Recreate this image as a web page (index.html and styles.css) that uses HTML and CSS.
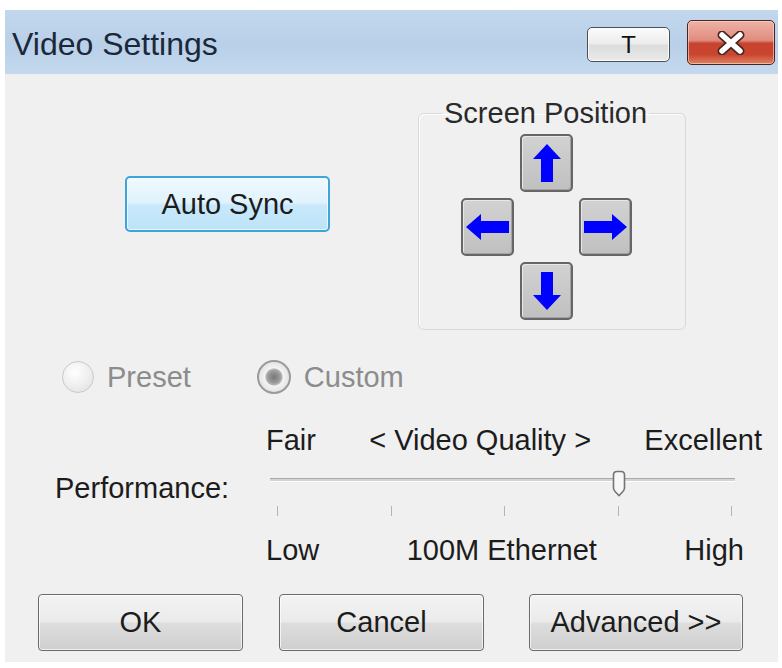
FILE: index.html
```html
<!DOCTYPE html>
<html lang="en">

<head>
    <meta charset="UTF-8">
    <meta name="viewport" content="width=device-width, initial-scale=1.0">
    <title>Video Settings</title>
    <link rel="stylesheet" href="styles.css">
</head>

<body>
    <div class="dialog">
        <!-- Window caption -->
        <div class="titlebar">
            <span class="title">Video Settings</span>
            <div class="caption-buttons">
                <button class="cap-btn pin" type="button">T</button>
                <button class="cap-btn close" type="button" aria-label="Close">
                    <svg width="32" height="24" viewBox="0 0 32 24">
                        <path d="M7 4 L25 20 M25 4 L7 20" stroke="#4a2622" stroke-width="9" stroke-linecap="round" />
                        <path d="M7 4 L25 20 M25 4 L7 20" stroke="#ffffff" stroke-width="5.5" stroke-linecap="round" />
                    </svg>
                </button>
            </div>
        </div>

        <div class="content">
            <div class="top-row">
                <button class="btn sync" type="button">Auto Sync</button>

                <fieldset class="position">
                    <legend>Screen Position</legend>
                    <div class="arrows">
                        <button class="arrow up" type="button" aria-label="Up">
                            <svg width="28" height="38" viewBox="0 0 28 38">
                                <polygon points="14,0 28,15 20,15 20,38 8,38 8,15 0,15" fill="#0000ff" />
                            </svg>
                        </button>
                        <button class="arrow left" type="button" aria-label="Left">
                            <svg width="43" height="26" viewBox="0 0 43 26">
                                <polygon points="0,13 15,0 15,7 43,7 43,19 15,19 15,26" fill="#0000ff" />
                            </svg>
                        </button>
                        <button class="arrow right" type="button" aria-label="Right">
                            <svg width="43" height="26" viewBox="0 0 43 26">
                                <polygon points="43,13 28,0 28,7 0,7 0,19 28,19 28,26" fill="#0000ff" />
                            </svg>
                        </button>
                        <button class="arrow down" type="button" aria-label="Down">
                            <svg width="28" height="38" viewBox="0 0 28 38">
                                <polygon points="14,38 28,23 20,23 20,0 8,0 8,23 0,23" fill="#0000ff" />
                            </svg>
                        </button>
                    </div>
                </fieldset>
            </div>

            <!-- Preset / Custom choice (disabled) -->
            <div class="mode-row">
                <label class="radio">
                    <span class="dot"></span>
                    Preset
                </label>
                <label class="radio checked">
                    <span class="dot"></span>
                    Custom
                </label>
            </div>

            <div class="quality">
                <div class="scale-top">
                    <span>Fair</span>
                    <span>&lt; Video Quality &gt;</span>
                    <span>Excellent</span>
                </div>

                <div class="perf-label">Performance:</div>

                <div class="slider">
                    <div class="track">
                        <span class="thumb" style="left: 75%">
                            <svg width="16" height="27" viewBox="0 0 16 27">
                                <path d="M2.5 5 Q2.5 1.5 6 1.5 H10 Q13.5 1.5 13.5 5 V18 Q13.5 20 11.5 22 L8 25.5 L4.5 22 Q2.5 20 2.5 18 Z" fill="#f7f7f7" stroke="#747474" stroke-width="1.6" />
                            </svg>
                        </span>
                    </div>
                    <div class="ticks">
                        <i></i><i></i><i></i><i></i><i></i>
                    </div>
                </div>

                <div class="scale-bottom">
                    <span>Low</span>
                    <span>100M Ethernet</span>
                    <span>High</span>
                </div>
            </div>

            <div class="actions">
                <button class="btn" type="button">OK</button>
                <button class="btn" type="button">Cancel</button>
                <button class="btn advanced" type="button">Advanced &gt;&gt;</button>
            </div>
        </div>
    </div>
</body>

</html>
```

FILE: styles.css
```css
/* Base page */
body {
    margin: 0;
    background: #ffffff;
    font-family: "Liberation Sans", Arial, sans-serif;
    color: #1c1c1c;
}

button {
    font: inherit;
    color: inherit;
    cursor: pointer;
}

/* Dialog window */
.dialog {
    width: 773px;
    margin: 10px 0 0 5px;
    background: #f0f0f0;
}

/* Caption bar */
.titlebar {
    height: 64px;
    display: flex;
    justify-content: space-between;
    background: linear-gradient(#c2d7ec, #b9d0e9 55%, #c4d9ee);
}

.title {
    padding: 0 0 0 7px;
    line-height: 68px;
    font-size: 32px;
    color: #1b283a;
}

.caption-buttons {
    display: flex;
    align-items: flex-start;
    padding-right: 3px;
}

.cap-btn {
    padding: 0;
    border: 1px solid #4b4f57;
    border-radius: 5px;
    display: flex;
    align-items: center;
    justify-content: center;
}

.pin {
    width: 83px;
    height: 35px;
    margin-top: 17px;
    font-size: 24px;
    color: #111;
    background: linear-gradient(#fbfbfb, #ececec 48%, #dcdcdc 52%, #e9e9e9);
    box-shadow: inset 0 0 0 1px rgba(255, 255, 255, 0.8);
}

.close {
    width: 88px;
    height: 45px;
    margin: 10px 0 0 17px;
    border-color: #4a2320;
    background: linear-gradient(#eeb2a6, #e08c7e 45%, #c8432f 52%, #c9452f 78%, #df8460);
    box-shadow: inset 0 0 0 1px rgba(255, 220, 210, 0.6);
}

/* Body of the dialog */
.content {
    padding: 22px 35px 11px 0;
}

.top-row {
    display: flex;
    align-items: flex-start;
    padding-left: 120px;
}

/* Generic push button */
.btn {
    height: 57px;
    padding: 0;
    font-size: 29px;
    border: 1px solid #6a6a6a;
    border-radius: 4px;
    background: linear-gradient(#f3f3f3, #ebebeb 48%, #dddddd 52%, #cfcfcf);
    box-shadow: inset 0 0 0 1px rgba(255, 255, 255, 0.7);
}

.sync {
    width: 205px;
    height: 56px;
    margin: 80px 88px 0 0;
    border: 2px solid #3aa6d9;
    border-radius: 5px;
    background: linear-gradient(#f0f9fe, #dff2fc 48%, #c8e9fb 52%, #bde3f8);
}

/* Screen position group box */
.position {
    width: 268px;
    box-sizing: border-box;
    margin: 0;
    padding: 0;
    border: 1px solid #d9d9d9;
    border-radius: 6px;
    box-shadow: inset 1px 1px 0 #ffffff;
}

.position legend {
    margin-left: 23px;
    padding: 0 2px;
    font-size: 29px;
    line-height: 34px;
    color: #2a2a2a;
}

.arrows {
    display: grid;
    grid-template-columns: repeat(3, 53px);
    grid-template-rows: repeat(3, 58px);
    gap: 6px;
    margin: 4px 52px 9px 42px;
}

.arrow {
    padding: 0;
    display: flex;
    align-items: center;
    justify-content: center;
    border: 2px solid #666666;
    border-radius: 5px;
    background: linear-gradient(#d2d2d2, #c0c0c0);
    box-shadow: inset 1px 1px 0 #e8e8e8, inset -1px -1px 0 #a4a4a4;
}

.up {
    grid-column: 2;
    grid-row: 1;
}

.left {
    grid-column: 1;
    grid-row: 2;
}

.right {
    grid-column: 3;
    grid-row: 2;
}

.down {
    grid-column: 2;
    grid-row: 3;
}

/* Radio buttons */
.mode-row {
    display: flex;
    align-items: center;
    height: 34px;
    margin-top: 30px;
    padding-left: 57px;
    font-size: 29px;
    color: #8c8c8c;
}

.radio {
    display: flex;
    align-items: center;
    gap: 13px;
    margin-right: 66px;
}

.radio .dot {
    width: 30px;
    height: 30px;
    border-radius: 50%;
    border: 1px solid #cacaca;
    background: radial-gradient(circle at 40% 35%, #ffffff, #ececec 60%, #dcdcdc);
}

.radio.checked .dot {
    border: 2px solid #9a9a9a;
    background: radial-gradient(circle, #777777 0, #9b9b9b 6px, #b5b5b5 8px, #f4f4f4 9px, #e6e6e6 14px);
}

/* Quality slider */
.quality {
    display: grid;
    grid-template-columns: 211px 496px;
    grid-template-rows: 34px 76px 34px;
    margin-top: 29px;
    padding-left: 50px;
    font-size: 29px;
    line-height: 34px;
}

.scale-top {
    grid-column: 2;
    grid-row: 1;
    display: flex;
    justify-content: space-between;
}

.perf-label {
    grid-column: 1;
    grid-row: 2;
    padding-top: 14px;
}

.slider {
    grid-column: 2;
    grid-row: 2;
    width: 465px;
    margin-left: 4px;
    padding-top: 21px;
}

.track {
    position: relative;
    height: 2px;
    background: #d4d4d4;
    border-top: 1px solid #a9a9a9;
    border-bottom: 1px solid #ffffff;
}

.thumb {
    position: absolute;
    top: -9px;
    margin-left: -8px;
    width: 16px;
    height: 27px;
}

.ticks {
    display: flex;
    justify-content: space-between;
    padding: 0 3px 0 7px;
    margin-top: 24px;
}

.ticks i {
    width: 1px;
    height: 10px;
    background: #b4b4b4;
}

.scale-bottom {
    grid-column: 2;
    grid-row: 3;
    display: flex;
    justify-content: space-between;
    padding-right: 18px;
}

/* Bottom buttons */
.actions {
    display: flex;
    gap: 36px;
    margin-top: 27px;
    padding-left: 33px;
}

.actions .btn {
    width: 205px;
}

.actions .advanced {
    width: 214px;
    margin-left: auto;
}
```
